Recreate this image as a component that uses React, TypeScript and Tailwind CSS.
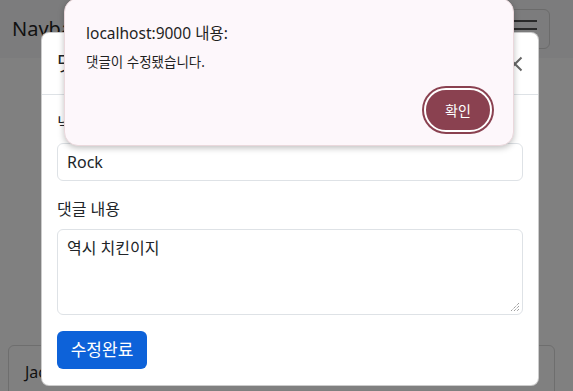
import React from 'react';

const KR = { fontFamily: '"Noto Sans", "Noto Sans CJK KR", sans-serif' };

const App: React.FC = () => {
    return (
        <div className="relative w-[573px] h-[391px] overflow-hidden bg-[#808080]" style={KR}>
            {/* page under the backdrop */}
            <nav className="h-[58px] bg-[#7c7c7d] flex items-center justify-between pl-3 pr-[23px]">
                <span className="text-[20px] text-[#111]">Navbar</span>
                <div className="w-[56px] h-[40px] border border-[#6b6b6b] rounded-md flex flex-col items-center justify-center gap-[6px]">
                    <span className="w-[30px] h-[2px] bg-[#2a2a2a]" />
                    <span className="w-[30px] h-[2px] bg-[#2a2a2a]" />
                    <span className="w-[30px] h-[2px] bg-[#2a2a2a]" />
                </div>
            </nav>
            <div className="ml-2 mr-[18px] mt-[287px] h-[80px] border border-[#6e6e6e] rounded-md px-4 pt-[14px] text-[16px] text-[#111]">
                Jack
            </div>

            {/* modal */}
            <div className="absolute left-[41px] top-[32px] w-[498px] h-[354px] bg-white rounded-lg border border-black/20 flex flex-col">
                <div className="h-[63px] border-b border-[#dee2e6] flex items-center justify-between pl-[15px] pr-[15px]">
                    <span className="text-[20px] text-[#212529]">댓글 수정</span>
                    <svg width="16" height="16" viewBox="0 0 16 16">
                        <path d="M1.5 1.5L14.5 14.5M14.5 1.5L1.5 14.5" stroke="#666" strokeWidth="2" />
                    </svg>
                </div>
                <div className="pl-[15px] pr-[15px] py-4 flex flex-col">
                    <label className="text-[16px] leading-6 text-[#212529] mb-2">닉네임</label>
                    <div className="h-[38px] border border-[#dee2e6] rounded-md px-[9px] flex items-center text-[16px] text-[#212529]">Rock</div>
                    <label className="text-[16px] leading-6 text-[#212529] mt-4 mb-2">댓글 내용</label>
                    <div className="relative h-[86px] border border-[#dee2e6] rounded-md px-[9px] py-[6px] text-[16px] leading-6 text-[#212529]">
                        역시 치킨이지
                        <svg width="10" height="10" viewBox="0 0 10 10" className="absolute right-[2px] bottom-[2px]">
                            <path d="M9 1L1 9M9 4L4 9M9 7L7 9" stroke="#777" strokeWidth="1" strokeDasharray="1 1" />
                        </svg>
                    </div>
                    <div className="mt-4">
                        <button className="h-[38px] w-[90px] rounded-md bg-[#0d62d9] text-white text-[17px]">수정완료</button>
                    </div>
                </div>
            </div>

            {/* browser alert */}
            <div className="absolute left-[64px] top-[-2px] w-[450px] h-[148px] bg-[#fdf7fb] rounded-[14px] border border-[#ead8dc] shadow-[0_2px_6px_rgba(0,0,0,0.25)] px-[21px] pt-[24px]">
                <p className="text-[15.5px] leading-5 text-[#1f1f1f]">localhost:9000 내용:</p>
                <p className="mt-[9px] text-[13.5px] leading-5 text-[#1f1f1f]">댓글이 수정됐습니다.</p>
                <div className="flex justify-end mt-[16px]">
                    <button className="w-[68px] h-[44px] rounded-full bg-[#8a4150] border-2 border-white ring-2 ring-[#8a4150] text-white text-[14px]">확인</button>
                </div>
            </div>
        </div>
    );
};

export default App;
